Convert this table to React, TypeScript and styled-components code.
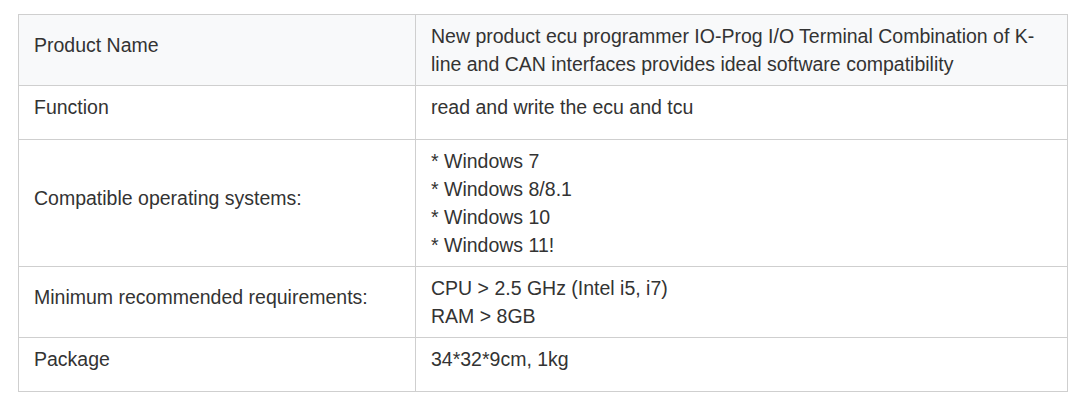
import React from "react"
import styled, { createGlobalStyle } from "styled-components"

const GlobalStyle = createGlobalStyle`
  body {
    margin: 0;
    background: #ffffff;
    font-family: "Liberation Sans", Arial, sans-serif;
    color: #333333;
  }
`

const specs = [
  {
    label: "Product Name",
    lines: [
      "New product ecu programmer IO-Prog I/O Terminal Combination of K-line and CAN interfaces provides ideal software compatibility",
    ],
  },
  { label: "Function", lines: ["read and write the ecu and tcu"] },
  {
    label: "Compatible operating systems:",
    lines: ["* Windows 7", "* Windows 8/8.1", "* Windows 10", "* Windows 11!"],
  },
  {
    label: "Minimum recommended requirements:",
    lines: ["CPU > 2.5 GHz (Intel i5, i7)", "RAM > 8GB"],
  },
  { label: "Package", lines: ["34*32*9cm, 1kg"] },
]

const App = () => {
  return (
    <Page>
      <GlobalStyle />
      <SpecTable>
        <colgroup>
          <col style={{ width: 397 }} />
          <col />
        </colgroup>
        <tbody>
          {specs.map((row, i) => (
            <Row key={row.label} shaded={i === 0}>
              <LabelCell>
                <Label>{row.label}</Label>
              </LabelCell>
              <ValueCell>
                <Value>
                  {row.lines.map((line) => (
                    <Line key={line}>{line}</Line>
                  ))}
                </Value>
              </ValueCell>
            </Row>
          ))}
        </tbody>
      </SpecTable>
    </Page>
  )
}

const Page = styled.div`
  padding: 14px 20px 12px 18px;
`

const SpecTable = styled.table`
  width: 100%;
  table-layout: fixed;
  border-collapse: collapse;
  font-size: 19.5px;
  line-height: 28px;
`

const Row = styled.tr<{ shaded?: boolean }>`
  background: ${({ shaded }) => (shaded ? "#f8f9fa" : "#ffffff")};
`

const Cell = styled.td`
  border: 1px solid #cfcfcf;
  padding: 7px 15px;
`

const LabelCell = styled(Cell)`
  vertical-align: middle;
`

const ValueCell = styled(Cell)`
  vertical-align: top;
`

const Label = styled.div`
  padding-bottom: 11px;
`

const Value = styled.div`
  min-height: 39px;
`

const Line = styled.div``

export default App
